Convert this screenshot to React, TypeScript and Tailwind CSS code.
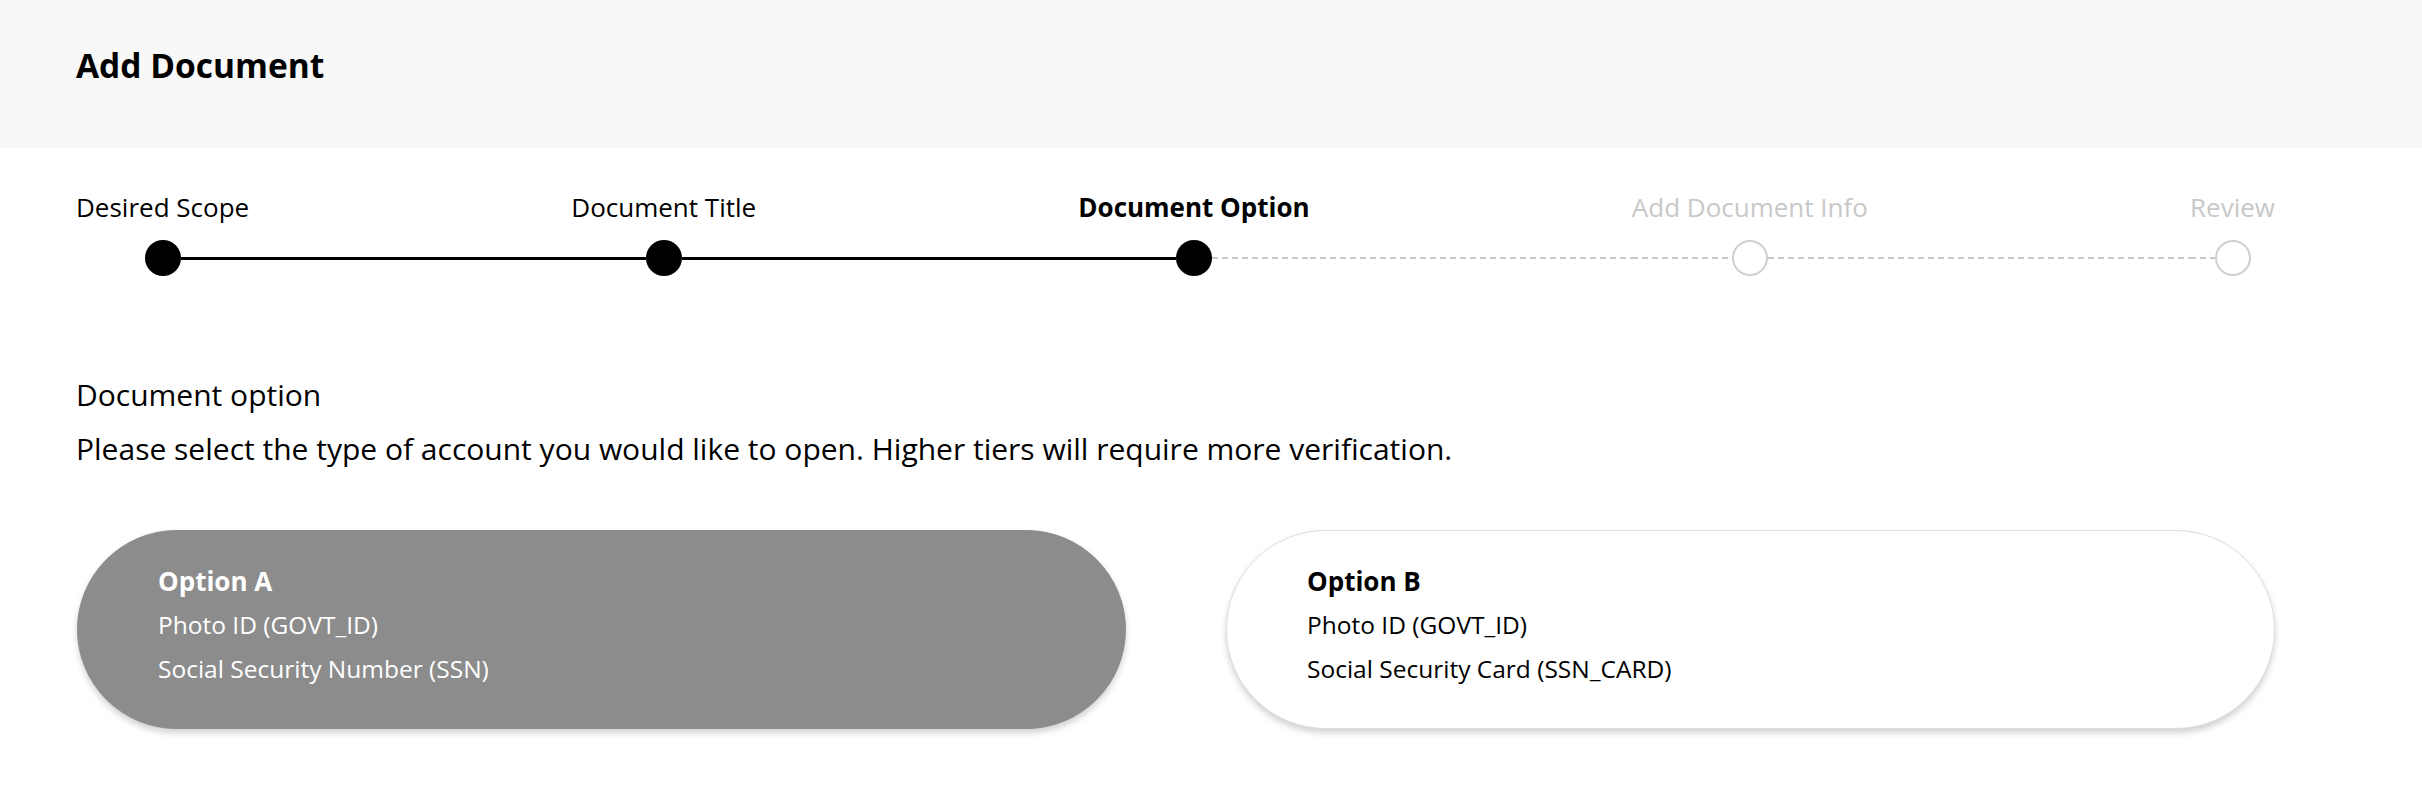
import { Fragment } from 'react';

type StepState = 'done' | 'active' | 'todo';

const STEPS: { label: string; state: StepState }[] = [
  { label: 'Desired Scope', state: 'done' },
  { label: 'Document Title', state: 'done' },
  { label: 'Document Option', state: 'active' },
  { label: 'Add Document Info', state: 'todo' },
  { label: 'Review', state: 'todo' },
];

const OPTIONS = [
  { title: 'Option A', lines: ['Photo ID (GOVT_ID)', 'Social Security Number (SSN)'], selected: true },
  { title: 'Option B', lines: ['Photo ID (GOVT_ID)', 'Social Security Card (SSN_CARD)'], selected: false },
];

// segment i joins step i and step i+1; solid once the next step is reached
function Line({ solid }: { solid: boolean }) {
  return solid ? (
    <div className="h-[3px] w-full bg-black" />
  ) : (
    <div className="h-[2px] w-full bg-[linear-gradient(to_right,#c8c8c8_6px,transparent_6px)] bg-[length:10px_2px] bg-repeat-x" />
  );
}

function Dot({ state }: { state: StepState }) {
  if (state === 'todo') {
    return <span className="w-9 h-9 shrink-0 rounded-full border-2 border-[#d0d0d0] bg-white" />;
  }
  return <span className="w-9 h-9 shrink-0 rounded-full bg-black" />;
}

function Stepper() {
  const segSolid = (i: number) => STEPS[i + 1].state !== 'todo';

  return (
    <div className="flex mt-[41px]">
      {STEPS.map((step, i) => (
        <Fragment key={step.label}>
          {i > 0 && (
            <div className="flex-1 flex flex-col">
              <div className="h-[36px] mb-[15px]" />
              <div className="h-[36px] flex items-center">
                <Line solid={segSolid(i - 1)} />
              </div>
            </div>
          )}
          <div className="flex flex-col items-center">
            <span
              className={`text-[26px] leading-[36px] mb-[15px] whitespace-nowrap ${
                step.state === 'active'
                  ? 'font-bold text-black'
                  : step.state === 'done'
                  ? 'text-black'
                  : 'text-[#c8c8c8]'
              }`}
            >
              {step.label}
            </span>
            <div className="flex items-center w-full h-[36px]">
              <div className="flex-1">{i > 0 && <Line solid={segSolid(i - 1)} />}</div>
              <Dot state={step.state} />
              <div className="flex-1">{i < STEPS.length - 1 && <Line solid={segSolid(i)} />}</div>
            </div>
          </div>
        </Fragment>
      ))}
    </div>
  );
}

export default function App() {
  return (
    <div className="min-h-[812px] bg-white text-black font-['Open_Sans',sans-serif]">
      {/* header */}
      <div className="h-[148px] bg-[#f8f8f8] pl-[76px] pt-[42px]">
        <h1 className="text-[33.5px] leading-[46px] font-bold">Add Document</h1>
      </div>

      <div className="pl-[76px] pr-[147px]">
        <Stepper />

        {/* intro */}
        <div className="mt-[92px] text-[30px] leading-[54px]">
          <p>Document option</p>
          <p>Please select the type of account you would like to open. Higher tiers will require more verification.</p>
        </div>

        {/* option cards */}
        <div className="grid grid-cols-2 gap-[100px] mt-[54px] ml-px">
          {OPTIONS.map((opt) => (
            <div
              key={opt.title}
              className={`h-[199px] rounded-full pl-[80px] pt-[28px] border shadow-[0_4px_6px_rgba(0,0,0,0.18)] ${
                opt.selected ? 'bg-[#8c8c8c] border-[#8c8c8c] text-white' : 'bg-white border-[#dedede] text-black'
              }`}
            >
              <p className="text-[26px] leading-[44px] font-bold">{opt.title}</p>
              {opt.lines.map((line) => (
                <p key={line} className="text-[24.5px] leading-[44px]">
                  {line}
                </p>
              ))}
            </div>
          ))}
        </div>
      </div>
    </div>
  );
}
